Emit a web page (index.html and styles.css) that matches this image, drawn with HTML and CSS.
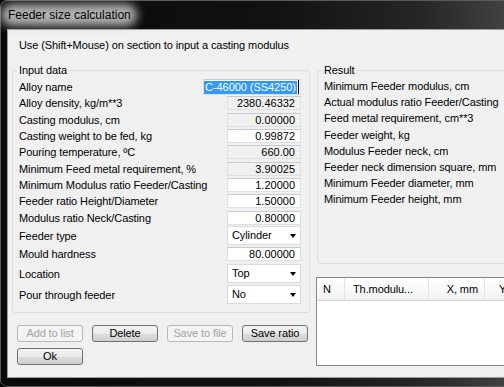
FILE: index.html
```html
<!DOCTYPE html>
<html>
<head>
<meta charset="utf-8">
<title>Feeder size calculation</title>
<link rel="stylesheet" href="styles.css">
</head>
<body>
<div class="window">
  <div class="titlebar"><span class="glow"></span><span class="title">Feeder size calculation</span></div>
  <div class="client">
    <p class="hint">Use (Shift+Mouse) on section to input a casting modulus</p>
    <div class="main">
      <div class="left">
        <fieldset class="group input-group">
          <legend>Input data</legend>
          <div class="row"><span>Alloy name</span><span class="edit wide"><span class="sel">C-46000 (SS4250)</span><span class="caret"></span></span></div>
          <div class="row"><span>Alloy density, kg/m**3</span><span class="edit ro">2380.46332</span></div>
          <div class="row"><span>Casting modulus, cm</span><span class="edit ro">0.00000</span></div>
          <div class="row"><span>Casting weight to be fed, kg</span><span class="edit">0.99872</span></div>
          <div class="row"><span>Pouring temperature, ºC</span><span class="edit ro">660.00</span></div>
          <div class="row"><span>Minimum Feed metal requirement, %</span><span class="edit ro">3.90025</span></div>
          <div class="row"><span>Minimum Modulus ratio Feeder/Casting</span><span class="edit">1.20000</span></div>
          <div class="row"><span>Feeder ratio Height/Diameter</span><span class="edit">1.50000</span></div>
          <div class="row"><span>Modulus ratio Neck/Casting</span><span class="edit">0.80000</span></div>
          <div class="row row-combo"><span>Feeder type</span><span class="combo"><span>Cylinder</span><span class="arrow"></span></span></div>
          <div class="row row-tall"><span>Mould hardness</span><span class="edit">80.00000</span></div>
          <div class="row row-combo gap"><span>Location</span><span class="combo"><span>Top</span><span class="arrow"></span></span></div>
          <div class="row row-combo gap"><span>Pour through feeder</span><span class="combo"><span>No</span><span class="arrow"></span></span></div>
        </fieldset>
        <div class="buttons">
          <button class="btn" disabled>Add to list</button>
          <button class="btn">Delete</button>
          <button class="btn" disabled>Save to file</button>
          <button class="btn">Save ratio</button>
          <button class="btn">Ok</button>
        </div>
      </div>
      <div class="right">
        <fieldset class="group result">
          <legend>Result</legend>
          <div class="rrow">Minimum Feeder modulus, cm</div>
          <div class="rrow">Actual modulus ratio Feeder/Casting</div>
          <div class="rrow">Feed metal requirement, cm**3</div>
          <div class="rrow">Feeder weight, kg</div>
          <div class="rrow">Modulus Feeder neck, cm</div>
          <div class="rrow">Feeder neck dimension square, mm</div>
          <div class="rrow">Minimum Feeder diameter, mm</div>
          <div class="rrow">Minimum Feeder height, mm</div>
        </fieldset>
        <div class="list">
          <div class="list-head">
            <span class="col c-n">N</span>
            <span class="col c-th">Th.modulu...</span>
            <span class="col c-x">X, mm</span>
            <span class="col c-y">Y, mm</span>
          </div>
        </div>
      </div>
    </div>
  </div>
</div>
</body>
</html>
```

FILE: styles.css
```css
* { box-sizing: border-box; }
html, body { margin: 0; padding: 0; overflow: hidden; background: #000; }
body {
  width: 504px;
  height: 387px;
  font-family: "Liberation Sans", Arial, sans-serif;
  font-size: 11px;
  letter-spacing: -0.1px;
  color: #000;
}
.window {
  width: 540px;
  height: 387px;
  display: flex;
  flex-direction: column;
  background: linear-gradient(to right, #0a0a0a 0%, #111 50%, #262626 78%, #4c4c4c 100%);
  border: 1px solid #5a5a5a;
  border-radius: 7px;
}
.titlebar {
  height: 28px;
  position: relative;
  display: flex;
  align-items: center;
  padding-left: 7px;
  flex: none;
}
.glow {
  position: absolute;
  left: 0;
  top: 3px;
  width: 136px;
  height: 22px;
  border-radius: 12px;
  background: rgba(200, 200, 200, 0.88);
  filter: blur(5px);
}
.title {
  position: relative;
  font-size: 12px;
  line-height: 14px;
  letter-spacing: 0;
  color: #000;
}
.client {
  flex: 1;
  margin: 0 0 8px 6px;
  border: 1px solid #9c9c9c;
  border-right: none;
  background: #f0f0f0;
}
.hint {
  margin: 0;
  padding: 8px 0 0 11px;
  line-height: 14px;
}
.main {
  display: flex;
  margin-top: 12px;
}
.left {
  width: 302px;
  flex: none;
}
.group {
  margin: 0;
  border: 1px solid #d5dfe5;
  border-radius: 3px;
  min-width: 0;
}
.group legend {
  padding: 0 2px;
  margin-left: -2px;
  line-height: 13px;
}
.input-group {
  margin-left: 4px;
  width: 298px;
  padding: 2px 8px 7px 6px;
}
.row {
  display: flex;
  align-items: center;
  justify-content: space-between;
  height: 16.3px;
  white-space: nowrap;
}
.row-combo { height: 20px; }
.row-tall { height: 17px; }
.gap { margin-top: 1px; }
.edit {
  width: 74px;
  height: 14px;
  border: 1px solid #dde0e4;
  border-top-color: #c8cbd0;
  background: #fff;
  text-align: right;
  padding-right: 5px;
  line-height: 12px;
  letter-spacing: 0;
}
.edit.ro { background: #f0f0f0; }
.edit.wide {
  width: 98px;
  height: 16px;
  display: flex;
  align-items: center;
  padding: 0;
  text-align: left;
}
.sel {
  background: #3399ff;
  color: #fff;
  line-height: 13px;
  padding: 0 1px 0 1px;
  letter-spacing: -0.05px;
}
.caret {
  width: 1px;
  height: 14px;
  background: #000;
  margin-left: 1px;
}
.combo {
  width: 74px;
  height: 19px;
  border: 1px solid #d8dbe0;
  background: #fff;
  display: flex;
  align-items: center;
  justify-content: space-between;
  padding: 0 4px 0 4px;
  line-height: 13px;
}
.arrow {
  width: 0;
  height: 0;
  border-left: 3.5px solid transparent;
  border-right: 3.5px solid transparent;
  border-top: 4px solid #000;
  margin-top: 1px;
}
.buttons {
  display: grid;
  grid-template-columns: repeat(4, 66px);
  column-gap: 9px;
  row-gap: 6px;
  padding-left: 9px;
  margin-top: 12px;
}
.btn {
  height: 17px;
  padding: 0;
  margin: 0;
  font-family: inherit;
  font-size: 11px;
  letter-spacing: inherit;
  line-height: 15px;
  color: #000;
  border: 1px solid #707070;
  border-radius: 3px;
  background: linear-gradient(#f2f2f2 0%, #ebebeb 50%, #dddddd 51%, #cfcfcf 100%);
}
.btn:disabled {
  border-color: #b5b9bc;
  background: #f4f4f4;
  color: #a3a3a3;
}
.right {
  flex: 1;
  margin-left: 7px;
}
.result {
  padding: 1px 6px 55px 6px;
}
.rrow {
  height: 16.2px;
  line-height: 16px;
  white-space: nowrap;
}
.list {
  margin-top: 13px;
  margin-left: -1px;
  height: 89px;
  border: 1px solid #828790;
  background: #fff;
}
.list-head {
  display: flex;
  height: 23px;
  background: linear-gradient(#ffffff 0%, #f7f8fa 60%, #f1f2f4 100%);
  border-bottom: 1px solid #d5d5d5;
}
.col {
  line-height: 22px;
  white-space: nowrap;
  border-right: 1px solid #e2e3e5;
}
.c-n { width: 28px; padding-left: 6px; }
.c-th { width: 84px; padding-left: 8px; }
.c-x { width: 56px; text-align: right; padding-right: 6px; }
.c-y { width: 60px; padding-left: 14px; border-right: none; }
```
